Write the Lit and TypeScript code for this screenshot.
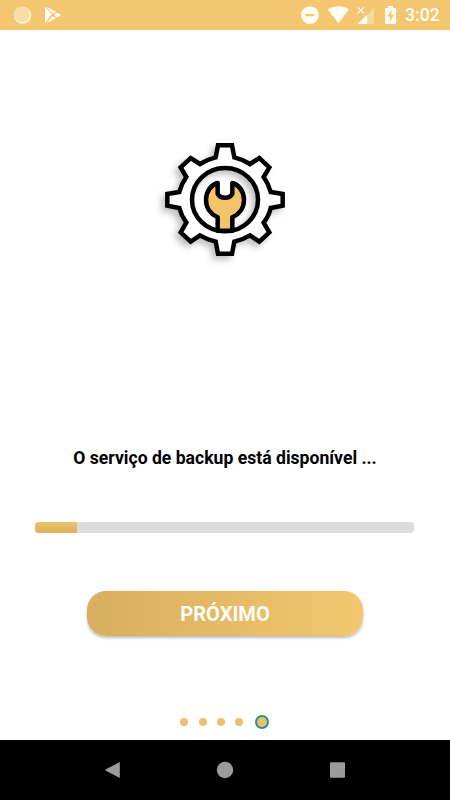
import { LitElement, html, css } from "lit";
import { customElement, property } from "lit/decorators.js";

@customElement("status-bar")
class StatusBar extends LitElement {
  static styles = css`
    :host { display: flex; height: 30px; background: #f4c66f; }
    svg { display: block; width: 400px; height: 30px; flex: none; }
    .time { color: #fffdf2; font: 500 17.6px/31px Roboto, sans-serif; padding-left: 5px; white-space: nowrap; }
  `;
  render() {
    return html`
      <svg viewBox="0 0 400 30" fill="#fffdf4">
        <circle cx="22.6" cy="15.2" r="8.6" opacity=".75" />
        <circle cx="21.8" cy="14.3" r="7.6" fill="#f9dda6" />
        <path d="M45 6.6 L51.6 13.9 L45 23.2Z M46.2 6.6 L56.2 11.8 L52.8 13.8Z M57.2 12.6 L61 15 L57.2 17.4 L54 15Z M46.2 23.3 L52.6 16 L56.2 18.1Z" />
        <circle cx="310" cy="15.1" r="8.9" />
        <rect x="305.6" y="14" width="8.8" height="2.3" fill="#f4c66f" />
        <path d="M327.8 9.5 C334 5.1 343 5.1 349 9.5 L338.4 23.2Z" />
        <path d="M374 8 V24 H357.5Z" opacity=".35" />
        <path d="M367 14.8 V24 H357.5Z" />
        <path d="M357.8 7.4 l6 6 M363.8 7.4 l-6 6" stroke="#fffdf4" stroke-width="1.3" />
        <path d="M388 6.1 h5 v1.8 h2.4 q.7 0 .7 .8 v14.2 q0 1-1 1 h-9 q-1 0-1-1 V8.7 q0-.8.7-.8 h2.2Z" />
        <path d="M391.5 10 L387.3 16.4 H390.1 V21.4 L394 14.7 H391.5Z" fill="#f4c66f" />
      </svg>
      <span class="time">3:02</span>
    `;
  }
}

@customElement("service-icon")
class ServiceIcon extends LitElement {
  static styles = css`
    :host { display: block; width: 150px; height: 140px; }
    svg { display: block; width: 150px; height: 140px; overflow: visible; }
    .gear { filter: drop-shadow(-11px 11px 9px rgba(0, 0, 0, 0.25)); }
  `;
  render() {
    return html`
      <svg viewBox="0 0 450 420" stroke="#000" stroke-width="13.5" stroke-linejoin="miter">
        <g class="gear">
          <path fill="#fff" fill-rule="evenodd" d="M204 46 H246 L253 82 Q278 88 300 102 L328 84 L358 112 L341 141 Q356 162 362 186 L398 192 V227 L362 234 Q357 257 341 278 L358 307 L328 335 L300 316 Q278 329 253 335 L246 371 H204 L197 335 Q172 329 150 316 L122 335 L92 307 L109 278 Q94 257 88 234 L52 227 V192 L88 186 Q94 162 109 141 L92 112 L122 84 L150 102 Q172 88 197 82Z M126 209 A99 95 0 0 0 324 209 A99 95 0 0 0 126 209Z" />
        </g>
        <path fill="#f4c46b" stroke-linejoin="round" d="M203 159 C182 165 168 185 168 210 C168 234 182 253 203 262 V302 H247 V262 C268 253 282 234 282 210 C282 185 268 165 247 159 V191 Q241 203 225 203 Q209 203 203 191Z" />
      </svg>
    `;
  }
}

@customElement("app-root")
class AppRoot extends LitElement {
  @property({ type: Number }) progress = 11;
  @property({ type: Number }) page = 4;

  static styles = css`
    :host { display: flex; flex-direction: column; width: 450px; height: 800px; background: #fff; font-family: Roboto, sans-serif; overflow: hidden; }
    main { flex: 1; display: flex; flex-direction: column; align-items: center; }
    service-icon { margin-top: 100px; }
    .message { margin: 176px 0 0; height: 24px; color: #000; font-size: 17.6px; line-height: 24px; font-weight: 700; white-space: nowrap; }
    .track { width: 379px; height: 10.5px; margin: 52px 0.4px 0 0; border-radius: 4px; background: #dcdcdc; overflow: hidden; }
    .bar { height: 100%; background: linear-gradient(#edc16d, #dcb05d); }
    button { width: 276px; height: 45.5px; margin: 58px 0 0; padding: 0; border: 0; border-radius: 19px; background: linear-gradient(90deg, #d6af60, #f4c66e); box-shadow: 0 2px 3px rgba(0, 0, 0, 0.26); color: #fffef8; font: 700 20.1px/46px Roboto, sans-serif; }
    .dots { display: flex; align-items: center; height: 14px; margin: 79px 0 0 -1px; gap: 10.4px; }
    .dot { width: 8px; height: 8px; border-radius: 50%; background: #ecc071; }
    .dot.active { width: 10px; height: 10px; margin-left: 1px; border: 2px solid #329287; }
    nav { height: 60px; background: #000; }
    nav svg { display: block; }
  `;
  render() {
    return html`
      <status-bar></status-bar>
      <main>
        <service-icon></service-icon>
        <p class="message">O serviço de backup está disponível ...</p>
        <div class="track"><div class="bar" style="width:${this.progress}%"></div></div>
        <button>PRÓXIMO</button>
        <div class="dots">
          ${[0, 1, 2, 3, 4].map((i) => html`<span class="dot ${i === this.page ? "active" : ""}"></span>`)}
        </div>
      </main>
      <nav>
        <svg width="450" height="60" fill="#9b9b9b">
          <path d="M119.8 22 V38 L105.5 30.6 Q104.7 30 105.5 29.4Z" />
          <circle cx="225" cy="30" r="8.2" />
          <rect x="330" y="22.2" width="15" height="15.6" rx=".7" />
        </svg>
      </nav>
    `;
  }
}
